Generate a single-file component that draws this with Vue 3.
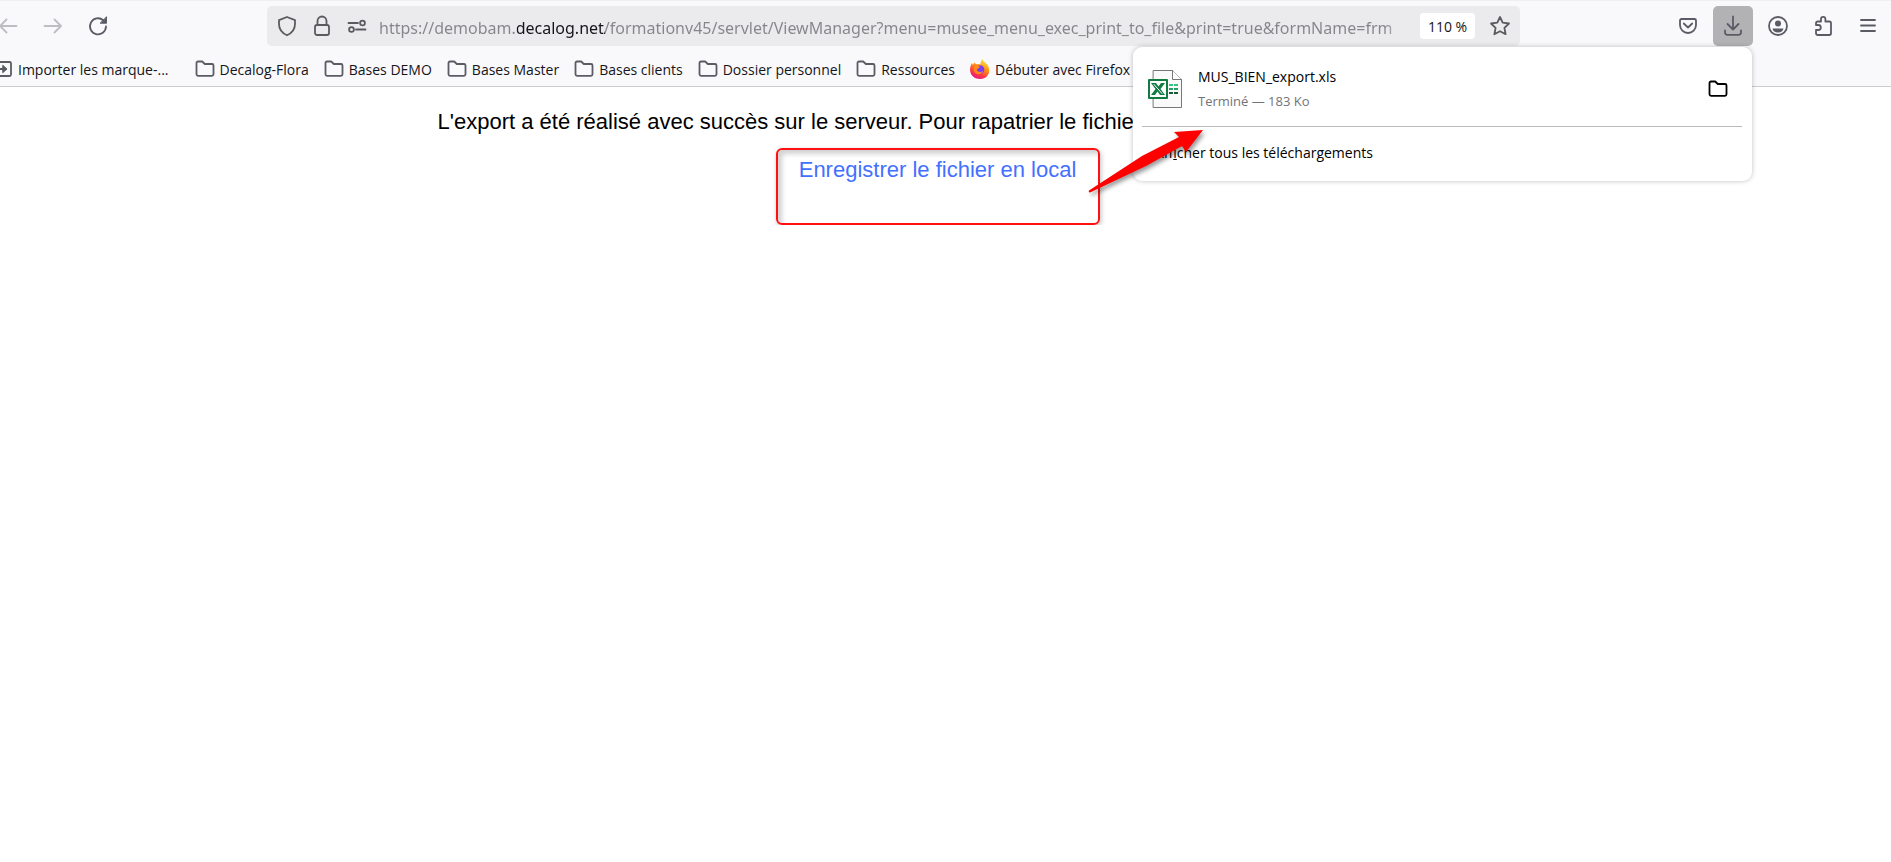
<template>
  <div class="browser">
    <header class="chrome">
      <div class="nav-bar">
        <div class="nav-group nav-left">
          <button class="tool-button" aria-label="Reculer" disabled>
            <svg width="20" height="20" viewBox="0 0 20 20">
              <path d="M18.500 10H2M8.500 3.500 2 10l6.500 6.500" />
            </svg>
          </button>
          <button class="tool-button" aria-label="Avancer" disabled>
            <svg width="20" height="20" viewBox="0 0 20 20">
              <path d="M1.500 10H18M11.500 3.500 18 10l-6.500 6.500" />
            </svg>
          </button>
          <button class="tool-button" aria-label="Actualiser">
            <svg width="20" height="20" viewBox="0 0 20 20">
              <path d="M18 10.500A8 8 0 1 1 15.200 4.200" />
              <path d="M18.500 1.200v6h-6z" fill="currentColor" stroke-width="1" />
            </svg>
          </button>
        </div>

        <div class="url-bar">
          <button class="url-icon" aria-label="Protection">
            <svg width="20" height="22" viewBox="0 0 20 22">
              <path d="M10 2 18 5.200V9c0 5-3 9-8 11.300C5 18 2 14 2 9V5.200z" />
            </svg>
          </button>
          <button class="url-icon" aria-label="Connexion sécurisée">
            <svg width="20" height="22" viewBox="0 0 20 22">
              <rect x="3" y="10" width="14" height="10" rx="2" />
              <path d="M5.500 10V6a4.500 4.500 0 0 1 9 0v4" />
            </svg>
          </button>
          <button class="url-icon" aria-label="Permissions">
            <svg width="20" height="20" viewBox="0 0 20 20">
              <path d="M1.500 7H11M9 13.500h9.500" />
              <circle cx="15.500" cy="7" r="2.400" />
              <circle cx="4.500" cy="13.500" r="2.400" />
            </svg>
          </button>
          <input v-model="url" class="url-input" type="text" aria-label="Adresse" spellcheck="false" />
          <button class="zoom-button">110 %</button>
          <button class="url-icon" aria-label="Marquer cette page">
            <svg width="22" height="22" viewBox="0 0 22 22">
              <path d="m11 2 2.700 5.700 6.300.8-4.600 4.300 1.200 6.400L11 16.200l-5.600 3 1.200-6.400L2 8.500l6.300-.8z" />
            </svg>
          </button>
        </div>

        <div class="nav-group">
          <button class="tool-button" aria-label="Pocket">
            <svg width="20" height="20" viewBox="0 0 20 20">
              <path d="M3.500 3h13A1.500 1.500 0 0 1 18 4.500V9a8 8 0 0 1-16 0V4.500A1.500 1.500 0 0 1 3.500 3z" />
              <path d="m5.800 7.500 4.200 4 4.200-4" />
            </svg>
          </button>
          <div class="download-anchor">
            <button class="tool-button active" aria-label="Téléchargements" @click="panelOpen = !panelOpen">
              <svg width="20" height="22" viewBox="0 0 20 22">
                <path d="M10 1.500v13M4.500 9l5.500 5.500L15.500 9M2 15.500v2A2.300 2.300 0 0 0 4.300 19.800h11.400a2.300 2.300 0 0 0 2.300-2.300v-2" />
              </svg>
            </button>
            <section v-if="panelOpen" class="download-panel">
              <div class="download-item">
                <svg class="file-icon" width="36" height="40" viewBox="0 0 36 40">
                  <path d="M6.500 1.500h19l9 9v28h-28z" fill="#fafafa" stroke="#777" stroke-width="1" />
                  <path d="M25.500 1.500v9h9" fill="#fff" stroke="#777" stroke-width="1" />
                  <path class="cell" d="M22 16h4M27 16h4" stroke="#33c481" />
                  <path class="cell" d="M22 20h4M27 20h4" stroke="#21a366" />
                  <path class="cell" d="M22 24h4M27 24h4" stroke="#185c37" />
                  <rect x="2" y="11" width="18" height="18" fill="#fff" stroke="#107c41" stroke-width="2" />
                  <path d="M4 14h5l2.500 3.500L14 14h4l-4.500 6 4.500 6h-5l-2.500-3.500L8 26H4l4.500-6z" fill="#107c41" stroke="none" />
                  <path d="m7 15.500 8 9" stroke="#fff" stroke-width="1" />
                </svg>
                <div class="file-info">
                  <span class="file-name">MUS_BIEN_export.xls</span>
                  <span class="file-state">Terminé — 183 Ko</span>
                </div>
                <button class="folder-button" aria-label="Ouvrir le dossier">
                  <svg width="20" height="18" viewBox="0 0 20 18">
                    <path :d="folderPath" />
                  </svg>
                </button>
              </div>
              <button class="show-all">Aff<u>i</u>cher tous les téléchargements</button>
            </section>
          </div>
          <button class="tool-button" aria-label="Compte">
            <svg width="22" height="22" viewBox="0 0 22 22">
              <circle cx="11" cy="11" r="9" />
              <circle cx="11" cy="8.500" r="3" fill="currentColor" stroke="none" />
              <path d="M5.500 13.500h11c-.5 2.500-2.500 4-5.500 4s-5-1.500-5.500-4z" fill="currentColor" stroke="none" />
            </svg>
          </button>
          <button class="tool-button" aria-label="Extensions">
            <svg width="20" height="22" viewBox="0 0 20 22">
              <path d="M3 10V8.200A1.700 1.700 0 0 1 4.700 6.500H8V4a2.200 2.200 0 0 1 4.400 0v2.500h3.900A1.700 1.700 0 0 1 18 8.200v10.100a1.700 1.700 0 0 1-1.700 1.700H4.700A1.700 1.700 0 0 1 3 18.300V15h2.300a2.400 2.400 0 0 0 0-5z" />
            </svg>
          </button>
          <button class="tool-button" aria-label="Menu">
            <svg width="20" height="20" viewBox="0 0 20 20">
              <path d="M3 4h14M3 9.500h14M3 15h14" />
            </svg>
          </button>
        </div>
      </div>

      <nav class="bookmarks">
        <a href="#" class="bookmark import">
          <svg width="20" height="18" viewBox="0 0 20 18">
            <path d="M4 5V3.500A1.500 1.500 0 0 1 5.500 2h11A1.500 1.500 0 0 1 18 3.500v11a1.500 1.500 0 0 1-1.500 1.500h-11A1.500 1.500 0 0 1 4 14.500V13M3 9h9" />
            <path d="m10 5.500 4 3.500-4 3.500z" fill="currentColor" stroke-width="1" />
          </svg>
          Importer les marque-...
        </a>
        <a v-for="name in folders" :key="name" href="#" class="bookmark">
          <svg width="20" height="18" viewBox="0 0 20 18">
            <path :d="folderPath" />
          </svg>
          {{ name }}
        </a>
        <a href="#" class="bookmark">
          <svg width="20" height="20" viewBox="0 0 20 20">
            <defs>
              <linearGradient id="flame" x1="0.800" y1="0" x2="0.300" y2="1">
                <stop offset="0" stop-color="#fff44f" />
                <stop offset="0.400" stop-color="#ff980e" />
                <stop offset="0.750" stop-color="#ff3647" />
                <stop offset="1" stop-color="#e31587" />
              </linearGradient>
            </defs>
            <path d="M12.500 0c.5 2.500 3 3.500 4.500 5.300 4 4.600 3 14-6.500 14.600C3.500 20 0 15.500 0 10.500 0 8 1 5.500 2 4l.8 2L4.500 3.500 6 5.300c2-.6 3.500-.3 4.500.2C10.500 3.500 11 1.500 12.500 0z" fill="url(#flame)" stroke="none" />
            <circle cx="10" cy="10.500" r="4.300" fill="#7a3ff0" stroke="none" />
            <path d="M4.500 7c2-.8 3.500-.5 5.500 1-1 1.500-3 1.300-3.200 2.800C7 13 11 14 13 12c-1 4-8 4.500-9.500-.5z" fill="#ff8a16" stroke="none" />
          </svg>
          Débuter avec Firefox
        </a>
      </nav>
    </header>

    <main class="page">
      <p class="message">L'export a été réalisé avec succès sur le serveur. Pour rapatrier le fichier</p>
      <div class="highlight">
        <a href="#" class="save-link">Enregistrer le fichier en local</a>
        <svg class="arrow" width="130" height="80" viewBox="0 0 130 80">
          <path d="M7 67.500 60 33 97 14l-5-5 29-2-17 22-4-6-36 20L8 69.500a1.200 1.200 0 0 1-1-2z" />
        </svg>
      </div>
    </main>
  </div>
</template>

<script setup>
import { ref } from 'vue'

const url = ref('https://demobam.decalog.net/formationv45/servlet/ViewManager?menu=musee_menu_exec_print_to_file&print=true&formName=frm')
const panelOpen = ref(true)

const folders = [
  'Decalog-Flora',
  'Bases DEMO',
  'Bases Master',
  'Bases clients',
  'Dossier personnel',
  'Ressources'
]

const folderPath = 'M1.500 14V3A1.500 1.500 0 0 1 3 1.500h4.200l2.600 2.500H17A1.500 1.500 0 0 1 18.500 5.500V14a1.800 1.800 0 0 1-1.800 1.800H3.300A1.800 1.800 0 0 1 1.500 14z'
</script>

<style>
body {
  margin: 0;
  background: #fff;
  overflow-x: hidden;
}
</style>

<style scoped>
.browser {
  font-family: 'Segoe UI', 'Open Sans', 'Noto Sans', sans-serif;
  font-size: 14px;
  color: #15141a;
}

button {
  font: inherit;
  color: inherit;
  border: none;
  background: none;
  padding: 0;
}

svg {
  display: block;
  flex-shrink: 0;
  fill: none;
  stroke: currentColor;
  stroke-width: 1.8;
  stroke-linecap: round;
  stroke-linejoin: round;
}

.chrome {
  background: #f9f9fb;
  border-top: 1px solid #efeff2;
  border-bottom: 1px solid #ccc;
}

.nav-bar {
  display: flex;
  align-items: center;
  padding: 5px 3px 0 0;
}

.nav-group {
  display: flex;
  gap: 5px;
}

.nav-left {
  margin-left: -12px;
}

.tool-button {
  display: flex;
  align-items: center;
  justify-content: center;
  width: 40px;
  height: 40px;
  border-radius: 5px;
  color: #5b5b66;
}

.tool-button:disabled {
  color: #bdbdc2;
}

.tool-button.active {
  background: #b2b2b4;
}

.url-bar {
  flex: 1;
  min-width: 0;
  display: flex;
  align-items: center;
  height: 40px;
  margin: 0 148px 0 149px;
  padding: 0 3px 0 2px;
  box-sizing: border-box;
  border-radius: 5px;
  background: #ebebed;
}

.url-icon {
  display: flex;
  align-items: center;
  justify-content: center;
  flex-shrink: 0;
  width: 35px;
  height: 36px;
  color: #5b5b5f;
}

.url-input {
  flex: 1;
  min-width: 0;
  margin: 0 12px 0 5px;
  padding: 3px 0 0;
  border: none;
  outline: none;
  font-family: 'Segoe UI', 'Noto Sans', sans-serif;
  font-size: 16px;
  color: transparent;
  caret-color: #15141a;
  background: linear-gradient(90deg, #85858a 138px, #15141a 138px, #15141a 226px, #85858a 226px);
  background-clip: text;
  -webkit-background-clip: text;
  mask-image: linear-gradient(90deg, #000 calc(100% - 24px), transparent);
}

.zoom-button {
  width: 55px;
  height: 26px;
  margin-right: 7px;
  flex-shrink: 0;
  border-radius: 4px;
  background: #fff;
}

.download-anchor {
  position: relative;
}

.download-panel {
  position: absolute;
  top: 41px;
  right: 1px;
  z-index: 10;
  width: 619px;
  box-sizing: border-box;
  padding: 0 10px 8px 9px;
  border-radius: 9px;
  background: #fff;
  box-shadow: 0 0 5px rgba(0, 0, 0, 0.25);
}

.download-item {
  display: flex;
  align-items: center;
  height: 79px;
  padding: 0 14px 0 5px;
  border-bottom: 1px solid #bbb;
}

.file-icon {
  margin-top: 4px;
}

.file-icon .cell {
  stroke-width: 2;
  stroke-linecap: butt;
}

.file-info {
  flex: 1;
  display: flex;
  flex-direction: column;
  gap: 4px;
  margin: 4px 0 0 15px;
  line-height: 20px;
}

.file-name,
.show-all {
  color: #000;
}

.file-state {
  font-size: 13px;
  color: #737378;
}

.folder-button {
  padding: 4px 0 0;
  color: #000;
}

.show-all {
  display: block;
  width: 100%;
  height: 46px;
  padding: 4px 0 0 13px;
  text-align: left;
  font-variant-ligatures: none;
}

.bookmarks {
  display: flex;
  align-items: center;
  gap: 15px;
  height: 40px;
  box-sizing: border-box;
  padding-top: 6px;
  white-space: nowrap;
}

.bookmark {
  display: flex;
  align-items: center;
  gap: 5px;
  color: #15141a;
  text-decoration: none;
}

.bookmark svg {
  color: #5b5b66;
}

.import {
  margin: 0 11px 0 -7px;
}

.page {
  padding: 22px 16px 0 0;
  font-family: Arial, 'Liberation Sans', sans-serif;
  font-size: 22px;
  line-height: 26px;
}

.message {
  max-width: 1000px;
  margin: 0 auto 13px;
  color: #000;
  white-space: nowrap;
}

.highlight {
  position: relative;
  width: 324px;
  height: 77px;
  box-sizing: border-box;
  margin: 0 auto;
  padding-top: 7px;
  border: 2px solid #f11;
  border-radius: 6px;
  text-align: center;
  box-shadow: 1px 2px 5px rgba(0, 0, 0, 0.25), inset 4px 4px 5px rgba(0, 0, 0, 0.18);
}

.save-link {
  color: #4370ff;
  text-decoration: none;
}

.arrow {
  position: absolute;
  top: -27px;
  left: 304px;
  z-index: 20;
  fill: #f00;
  stroke: none;
  filter: drop-shadow(2px 3px 2px rgba(0, 0, 0, 0.4));
}
</style>
